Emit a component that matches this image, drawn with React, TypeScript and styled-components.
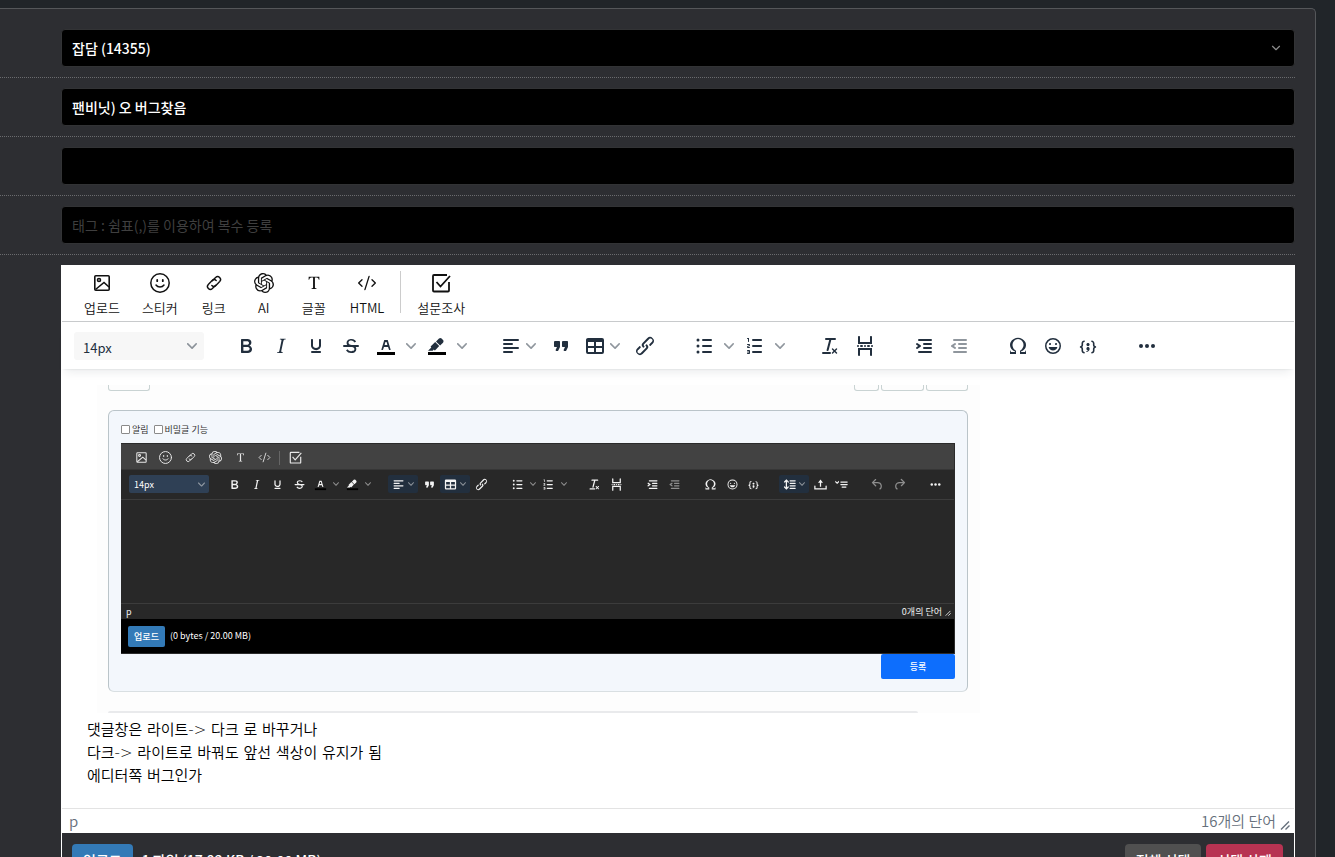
import React from "react";
import styled, { createGlobalStyle, css } from "styled-components";
import { CodeXml, ChevronDown } from "lucide-react";
import { SiOpenai } from "react-icons/si";
import { BsFonts } from "react-icons/bs";

const sans = `"Noto Sans CJK KR", "Noto Sans", sans-serif`;

const GlobalStyle = createGlobalStyle`
  *, *::before, *::after { box-sizing: border-box; }
  body { margin: 0; background: #212529; font-family: ${sans}; }
  button, input, select { font-family: inherit; margin: 0; }
  p { margin: 0; }
`;

/* ---------- icons ---------- */

const bar = (x: number, y: number, w: number) => <rect key={`${x}-${y}`} x={x} y={y} width={w} height={2} rx={1} />;

const glyphs = {
  bold: <path fillRule="evenodd" d="M7.8 19c-.3 0-.5 0-.6-.2l-.2-.5V5.7c0-.2 0-.4.2-.5l.6-.2h5c1.5 0 2.7.3 3.5 1 .7.6 1.1 1.4 1.1 2.5a3 3 0 0 1-.6 1.9c-.4.6-1 1-1.6 1.2.4.1.9.3 1.3.6s.8.7 1 1.2c.4.4.5 1 .5 1.6 0 1.3-.4 2.3-1.3 3-.8.7-2.1 1-3.8 1H7.8Zm5-8.3c.6 0 1.2-.1 1.6-.5.4-.3.6-.7.6-1.3 0-1.1-.8-1.7-2.3-1.7H9.3v3.5h3.4Zm.5 6c.7 0 1.3-.1 1.7-.4.4-.4.6-.9.6-1.5s-.2-1-.7-1.4c-.4-.3-1-.4-2-.4H9.4v3.8h4Z" />,
  italic: <path d="m16.7 4.7-.1.9h-.3c-.6 0-1 0-1.4.3-.3.3-.4.6-.5 1.1l-2.1 9.8v.6c0 .5.4.8 1.4.8h.2l-.2.8H8l.2-.8h.2c1.1 0 1.8-.5 2-1.5l2-9.8.1-.5c0-.6-.4-.8-1.4-.8h-.3l.2-.9h5.8Z" />,
  underline: <path d="M16 5c.6 0 1 .4 1 1v5.5a4 4 0 0 1-.4 1.8l-1 1.4a5.3 5.3 0 0 1-5.5 1 5 5 0 0 1-1.6-1c-.5-.4-.8-.9-1.1-1.4a4 4 0 0 1-.4-1.8V6c0-.6.4-1 1-1s1 .4 1 1v5.5c0 .3 0 .6.2 1l.6.7a3.3 3.3 0 0 0 2.2.8 3.4 3.4 0 0 0 2.2-.8c.3-.2.4-.5.6-.8l.2-.9V6c0-.6.4-1 1-1ZM8 17h8c.6 0 1 .4 1 1s-.4 1-1 1H8a1 1 0 0 1 0-2Z" />,
  strike: (
    <>
      <path d="M15.6 8.5c-.5-.7-1-1.1-1.3-1.3-.6-.4-1.3-.6-2-.6-2.7 0-2.8 1.7-2.8 2.1 0 1.6 1.8 2 3.2 2.3 4.4.9 4.6 2.8 4.6 3.9 0 1.4-.7 4.1-5 4.1A6.2 6.2 0 0 1 7 16.4l1.5-1.1c.4.6 1.6 2 3.7 2 1.6 0 2.5-.4 3-1.2.4-.8.3-2-.8-2.6-.7-.4-1.6-.7-2.9-1-1-.2-3.9-.8-3.9-3.6C7.6 6 10.3 5 12.4 5c2.9 0 4.2 1.6 4.7 2.4l-1.5 1.1Z" />
      <path d="M5 11h14a1 1 0 0 1 0 2H5a1 1 0 0 1 0-2Z" />
    </>
  ),
  color: (
    <>
      <path fill="#000" d="M3 18h18v3H3z" />
      <path d="M8.7 16h-.8a.5.5 0 0 1-.5-.6l2.7-9c.1-.3.3-.4.5-.4h2.8c.2 0 .4.1.5.4l2.7 9a.5.5 0 0 1-.5.6h-.8a.5.5 0 0 1-.4-.4l-.7-2.2c0-.3-.3-.4-.5-.4h-3.4c-.2 0-.4.1-.5.4l-.7 2.2c0 .3-.2.4-.4.4Zm2.6-7.6-.6 2a.5.5 0 0 0 .5.6h1.6a.5.5 0 0 0 .5-.6l-.6-2c0-.3-.3-.4-.5-.4h-.4c-.2 0-.4.1-.5.4Z" />
    </>
  ),
  highlight: (
    <>
      <path fill="#000" d="M3 18h18v3H3z" />
      <path d="M7.7 16.7H3l3.3-3.3-.7-.8L10.2 8l4 4.1-4 4.2c-.2.2-.6.2-.8 0l-.6-.7-1.1 1.1zm5-7.5L11 7.4l3-2.9a2 2 0 0 1 2.6 0L18 6c.7.7.7 2 0 2.7l-2.9 2.9-1.8-1.8-.5-.6" />
    </>
  ),
  align: <>{bar(4, 5, 16)}{bar(4, 9, 10)}{bar(4, 13, 16)}{bar(4, 17, 10)}</>,
  quote: <path d="M7.5 17h.9c.4 0 .7-.2.9-.6L11 13V8c0-.6-.4-1-1-1H6a1 1 0 0 0-1 1v4c0 .6.4 1 1 1h2l-1.3 2.7a1 1 0 0 0 .8 1.3Zm8 0h.9c.4 0 .7-.2.9-.6L19 13V8c0-.6-.4-1-1-1h-4a1 1 0 0 0-1 1v4c0 .6.4 1 1 1h2l-1.3 2.7a1 1 0 0 0 .8 1.3Z" />,
  table: <path d="M19 4a2 2 0 0 1 2 2v12a2 2 0 0 1-2 2H5a2 2 0 0 1-2-2V6c0-1.1.9-2 2-2h14ZM5 14v4h6v-4H5Zm14 0h-6v4h6v-4Zm0-6h-6v4h6V8ZM5 12h6V8H5v4Z" />,
  link: <path d="M6.2 12.3a1 1 0 0 1 1.4 1.4l-2 2a2 2 0 1 0 2.6 2.8l4.8-4.8a1 1 0 0 0 0-1.4 1 1 0 1 1 1.4-1.3 2.9 2.9 0 0 1 0 4L9.6 20a3.9 3.9 0 0 1-5.5-5.5l2-2Zm11.6-.6a1 1 0 0 1-1.4-1.4l2-2a2 2 0 1 0-2.6-2.8L11 10.3a1 1 0 0 0 0 1.4A1 1 0 1 1 9.6 13a2.9 2.9 0 0 1 0-4L14.4 4a3.9 3.9 0 0 1 5.5 5.5l-2 2Z" />,
  bullets: (
    <>
      {bar(10, 5, 10)}{bar(10, 11, 10)}{bar(10, 17, 10)}
      <circle cx="6" cy="6" r="1.5" /><circle cx="6" cy="12" r="1.5" /><circle cx="6" cy="18" r="1.5" />
    </>
  ),
  numbers: <path d="M10 17h8c.6 0 1 .4 1 1s-.4 1-1 1h-8a1 1 0 0 1 0-2Zm0-6h8c.6 0 1 .4 1 1s-.4 1-1 1h-8a1 1 0 0 1 0-2Zm0-6h8c.6 0 1 .4 1 1s-.4 1-1 1h-8a1 1 0 1 1 0-2ZM6 4v3.5c0 .3-.2.5-.5.5a.5.5 0 0 1-.5-.5V5h-.5a.5.5 0 0 1 0-1H6Zm-1 8.800.2.2h1.300c.3 0 .5.2.5.5s-.2.5-.5.5H4.900a1 1 0 0 1-.9-1V13c0-.4.3-.8.6-1l1.200-.4.2-.3a.2.2 0 0 0-.2-.2H4.500a.5.5 0 0 1-.5-.5c0-.3.2-.5.5-.5h1.600c.5 0 .9.4.9 1v.1c0 .4-.3.8-.6 1l-1.200.4-.2.3ZM7 17v2c0 .6-.4 1-1 1H4.500a.5.5 0 0 1 0-1h1.200c.2 0 .3-.1.3-.3 0-.2-.1-.3-.3-.3H4.400a.4.4 0 1 1 0-.8h1.300c.2 0 .3-.1.3-.3 0-.2-.1-.3-.3-.3H4.500a.5.5 0 1 1 0-1H6c.6 0 1 .4 1 1Z" />,
  clear: <path d="M13.2 6a1 1 0 0 1 0 .2l-2.6 10a1 1 0 0 1-1 .8h-.2a.8.8 0 0 1-.8-1l2.6-10H8a1 1 0 1 1 0-2h9a1 1 0 0 1 0 2h-3.8ZM5 18h7a1 1 0 0 1 0 2H5a1 1 0 0 1 0-2Zm13 1.5L16.5 18 15 19.5a.7.7 0 0 1-1-1l1.5-1.5-1.5-1.5a.7.7 0 0 1 1-1l1.5 1.5 1.5-1.5a.7.7 0 0 1 1 1L17.5 17l1.5 1.5a.7.7 0 0 1-1 1Z" />,
  pageBreak: (
    <>
      <path d="M7 3v5h10V3c0-.6.4-1 1-1s1 .4 1 1v7H5V3c0-.6.4-1 1-1s1 .4 1 1ZM6 22a1 1 0 0 1-1-1v-7h14v7c0 .6-.4 1-1 1a1 1 0 0 1-1-1v-5H7v5c0 .6-.4 1-1 1Z" />
      {bar(4, 11, 2)}{bar(7, 11, 3)}{bar(11, 11, 2)}{bar(14, 11, 3)}{bar(18, 11, 2)}
    </>
  ),
  indent: (
    <>
      {bar(6, 5, 14)}{bar(11, 9, 9)}{bar(11, 13, 9)}{bar(6, 17, 14)}
      <path d="M4.4 13.2 6.2 12l-1.8-1.2a1 1 0 0 1 1.2-1.6l3 2a1 1 0 0 1 0 1.6l-3 2a1 1 0 1 1-1.2-1.6Z" />
    </>
  ),
  outdent: (
    <>
      {bar(6, 5, 14)}{bar(11, 9, 9)}{bar(11, 13, 9)}{bar(6, 17, 14)}
      <path d="M8.6 13.2a1 1 0 0 1-1.2 1.6l-3-2a1 1 0 0 1 0-1.6l3-2a1 1 0 0 1 1.2 1.6L6.8 12l1.8 1.2Z" />
    </>
  ),
  omega: <path d="M15 18h4l1-2v4h-6v-3.3l1.4-1a6 6 0 0 0 1.8-2.9 6.3 6.3 0 0 0-.1-4.1 5.8 5.8 0 0 0-3-3.2c-.6-.3-1.3-.5-2.1-.5a5.1 5.1 0 0 0-3.9 1.8 6.3 6.3 0 0 0-1.3 6 6.2 6.2 0 0 0 1.8 3l1.4.9V20H4v-4l1 2h4v-.5l-2-1L5.4 15A6.5 6.5 0 0 1 4 11c0-1 .2-1.9.6-2.7A7 7 0 0 1 7.8 5a7.8 7.8 0 0 1 8.4 0 7.3 7.3 0 0 1 3.2 3.3c.4.8.6 1.7.6 2.7 0 1.5-.5 3-1.4 4L17 16.5l-2 1v.5Z" />,
  emoji: <path d="M9 11c.6 0 1-.4 1-1s-.4-1-1-1a1 1 0 0 0-1 1c0 .6.4 1 1 1Zm6 0c.6 0 1-.4 1-1s-.4-1-1-1a1 1 0 0 0-1 1c0 .6.4 1 1 1Zm-3 5.5c2.1 0 4-1.5 4.4-3.5H7.6c.5 2 2.3 3.5 4.4 3.5ZM12 4a8 8 0 1 0 0 16 8 8 0 0 0 0-16Zm0 14.5a6.5 6.5 0 1 1 0-13 6.5 6.5 0 0 1 0 13Z" />,
  code: <path d="M7.1 11a2.8 2.8 0 0 1-.8 2 2.8 2.8 0 0 1 .8 2v1.7c0 .3.1.6.4.8.2.3.5.4.8.4.3 0 .4.2.4.4v.8c0 .2-.1.4-.4.4-.7 0-1.4-.3-2-.8-.5-.6-.8-1.3-.8-2V15c0-.3-.1-.6-.4-.8-.2-.3-.5-.4-.8-.4a.4.4 0 0 1-.4-.4v-.8c0-.2.2-.4.4-.4.3 0 .6-.1.8-.4.3-.2.4-.5.4-.8V9.3c0-.7.3-1.4.8-2 .6-.5 1.3-.8 2-.8.3 0 .4.2.4.4v.8c0 .2-.1.4-.4.4-.3 0-.6.1-.8.4-.3.2-.4.5-.4.8V11Zm9.8 0V9.3c0-.3-.1-.6-.4-.8-.2-.3-.5-.4-.8-.4a.4.4 0 0 1-.4-.4V7c0-.2.1-.4.4-.4.7 0 1.4.3 2 .8.5.6.8 1.3.8 2V11c0 .3.1.6.4.8.2.3.5.4.8.4.2 0 .4.2.4.4v.8c0 .2-.2.4-.4.4-.3 0-.6.1-.8.4-.3.2-.4.5-.4.8v1.7c0 .7-.3 1.4-.8 2-.6.5-1.3.8-2 .8a.4.4 0 0 1-.4-.4v-.8c0-.2.1-.4.4-.4.3 0 .6-.1.8-.4.3-.2.4-.5.4-.8V15a2.8 2.8 0 0 1 .8-2 2.8 2.8 0 0 1-.8-2Zm-3.3-.4c0 .4-.1.8-.5 1.1-.3.3-.7.5-1.1.5-.4 0-.8-.2-1.1-.5-.4-.3-.5-.7-.5-1.1 0-.5.1-.9.5-1.2.3-.3.7-.4 1.1-.4.4 0 .8.1 1.1.4.4.3.5.7.5 1.2ZM12 13c.4 0 .8.1 1.1.5.4.3.5.7.5 1.1 0 1-.1 1.6-.5 2a3 3 0 0 1-1.1 1c-.4.3-.8.4-1.1.4a.5.5 0 0 1-.5-.5V17a3 3 0 0 0 1-.2l.6-.6c-.6 0-1-.2-1.3-.5-.2-.3-.3-.7-.3-1 0-.5.1-1 .5-1.2.3-.4.7-.5 1.1-.5Z" />,
  lineHeight: (
    <>
      {bar(12, 5, 10)}{bar(12, 9, 10)}{bar(12, 13, 10)}{bar(12, 17, 10)}
      <path d="M7 3.6l3.7 3.7a1 1 0 0 1-1.3 1.5h-.1L8 7.3v9.2l1.3-1.3a1 1 0 0 1 1.3 0h.1c.4.4.4 1 0 1.3v.1L7 20.4l-3.7-3.7a1 1 0 0 1 1.3-1.5h.1L6 16.7V7.4L4.7 8.7a1 1 0 0 1-1.3 0h-.1a1 1 0 0 1 0-1.3v-.1L7 3.6z" />
    </>
  ),
  exportTray: <path d="M11 15.500V9H8l4-5 4 5h-3v6.500ZM2 14.500a1 1 0 0 1 2 0V18h16v-3.500a1 1 0 0 1 2 0V20H2Z" />,
  accordion: (
    <>
      {bar(10, 7, 12)}{bar(10, 11, 12)}{bar(12, 15, 8)}
      <path d="M2 6l3 2.500L8 6v2.500l-3 2.500-3-2.500Z" />
    </>
  ),
  undo: <path d="M6.4 8H12c3.7 0 6.2 2 6.8 5.1.6 2.7-.4 5.6-2.3 6.8a1 1 0 0 1-1-1.8c1.1-.6 1.8-2.7 1.4-4.6-.5-2.1-2.1-3.5-4.9-3.5H6.4l3.3 3.3a1 1 0 1 1-1.4 1.4l-5-5a1 1 0 0 1 0-1.4l5-5a1 1 0 0 1 1.4 1.4L6.4 8Z" />,
  redo: <path d="M17.6 10H12c-2.8 0-4.4 1.4-4.9 3.5-.4 2 .3 4 1.4 4.6a1 1 0 1 1-1 1.8c-2-1.2-2.9-4.1-2.3-6.8.6-3 3-5.1 6.8-5.1h5.6l-3.3-3.3a1 1 0 1 1 1.4-1.4l5 5a1 1 0 0 1 0 1.4l-5 5a1 1 0 0 1-1.4-1.4l3.3-3.3Z" />,
  more: <><circle cx="6" cy="12" r="2" /><circle cx="12" cy="12" r="2" /><circle cx="18" cy="12" r="2" /></>,
};

type GlyphName = keyof typeof glyphs;

const Glyph = ({ name, size }: { name: GlyphName; size: number }) => (
  <svg width={size} height={size} viewBox="0 0 24 24" fill="currentColor" aria-hidden="true">{glyphs[name]}</svg>
);

const Caret = ({ size = 10 }: { size?: number }) => (
  <svg width={size} height={size} viewBox="0 0 10 10" fill="currentColor" aria-hidden="true">
    <path d="M8.7 2.2c.3-.3.8-.3 1 0 .4.4.4.9 0 1.2L5.7 7.8c-.3.3-.9.3-1.2 0L.2 3.4a.8.8 0 0 1 0-1.2c.3-.3.8-.3 1.1 0L5 6l3.7-3.8Z" />
  </svg>
);

const ResizeMark = ({ size }: { size: number }) => (
  <svg width={size} height={size} viewBox="0 0 10 10" stroke="currentColor" strokeWidth="1.4" fill="none" aria-hidden="true">
    <path d="M1 9.5 9 1.5M5.5 9.5 9.5 5.5" />
  </svg>
);

const PictureIcon = ({ size }: { size: number }) => (
  <svg width={size} height={size} viewBox="0 0 20 20" fill="none" stroke="currentColor" strokeWidth="1.6" aria-hidden="true">
    <rect x="2.8" y="2.8" width="14.4" height="14.4" rx="1" />
    <circle cx="7" cy="7" r="1.5" />
    <path d="m3.5 16.5 8.500-7 5 4.500" />
  </svg>
);

const StickerIcon = ({ size }: { size: number }) => (
  <svg width={size} height={size} viewBox="0 0 20 20" fill="none" stroke="currentColor" strokeWidth="1.5" strokeLinecap="round" aria-hidden="true">
    <circle cx="10" cy="10" r="9.2" />
    <path d="M7.200 7v1.200M12.800 7v1.200" strokeWidth="1.8" />
    <path d="M6 12c1.800 2.600 6.200 2.600 8 0" />
  </svg>
);

const ChainIcon = ({ size }: { size: number }) => (
  <svg width={size} height={size} viewBox="0 0 20 20" fill="none" stroke="currentColor" strokeWidth="1.4" strokeLinecap="round" aria-hidden="true">
    <path d="m8.300 7.800 3.300-3.300a2.900 2.900 0 0 1 4.100 4.100l-3.800 3.800a2.900 2.900 0 0 1-4.100 0" />
    <path d="m11.700 12.200-3.300 3.300a2.900 2.900 0 0 1-4.100-4.100l3.800-3.800a2.900 2.900 0 0 1 4.100 0" />
  </svg>
);

const PollIcon = ({ size }: { size: number }) => (
  <svg width={size} height={size} viewBox="0 0 20 20" fill="none" stroke="currentColor" strokeWidth="1.8" aria-hidden="true">
    <path d="M16 2H3a1 1 0 0 0-1 1v14.500a1 1 0 0 0 1 1h14a1 1 0 0 0 1-1V9" />
    <path d="m5.500 9 4 4.500L19 3" />
  </svg>
);

/* ---------- page frame ---------- */

const Page = styled.main`
  height: 100vh;
  overflow: hidden;
  padding: 8px 19px 0 0;
`;

const Panel = styled.form`
  padding: 10px 20px 40px 0;
  background: #2d2e32;
  border: solid #55575a;
  border-width: 1px 1px 0 0;
  border-top-right-radius: 5px;
`;

const FieldRow = styled.div`
  position: relative;
  padding: 10px 0 10px 61px;
  border-bottom: 1px dotted #6a6b6e;
`;

const fieldStyle = css`
  display: block;
  width: 100%;
  height: 38px;
  padding: 0 10px;
  border: 1px solid #323335;
  border-radius: 4px;
  background: #000;
  color: #fff;
  font-size: 14px;
  font-weight: 500;
  line-height: 20px;
  appearance: none;
`;

const FieldSelect = styled.select`${fieldStyle}`;

const FieldInput = styled.input`
  ${fieldStyle}
  &::placeholder { color: #3f3f3f; opacity: 1; font-weight: 400; }
`;

const FieldCaret = styled.span`
  position: absolute;
  top: 22px;
  right: 12px;
  display: flex;
  color: #8c8c8c;
  pointer-events: none;
`;

/* ---------- editor ---------- */

const Editor = styled.section`
  margin: 10px 0 0 61px;
  border: solid #fff;
  border-width: 0 1px;
`;

const MediaBar = styled.div`
  display: flex;
  height: 57px;
  padding: 6px 11px 5px;
  background: #fff;
  border-bottom: 1px solid #c8cacc;
`;

const MediaButton = styled.button`
  display: flex;
  flex-direction: column;
  align-items: center;
  justify-content: space-between;
  min-width: 50px;
  padding: 2px 11px 0;
  border: 0;
  background: none;
  color: #111;
  font-size: 13px;
  font-weight: 350;
  line-height: 16px;
`;

const IconSlot = styled.span`
  display: flex;
  align-items: center;
  justify-content: center;
  height: 20px;
`;

const MediaDivider = styled.span`
  width: 1px;
  margin: 0 5px 3px;
  background: #ccc;
`;

const ToolBar = styled.div`
  position: relative;
  display: flex;
  gap: 25px;
  height: 47px;
  padding: 10px 12px 9px;
  background: #fff;
  color: #222f3e;
  box-shadow: 0 2px 2px -2px rgba(34, 47, 62, 0.15), 0 8px 8px -4px rgba(34, 47, 62, 0.08);
`;

const ToolGroup = styled.div`
  display: flex;
  gap: 1px;
`;

type ToolKind = "plain" | "split" | "menu";

const toolWidths: Record<ToolKind, string> = { plain: "34px", split: "50px", menu: "48px" };

const Tool = styled.button<{ $kind: ToolKind }>`
  display: flex;
  align-items: center;
  gap: ${(p) => (p.$kind === "menu" ? 3 : 8)}px;
  width: ${(p) => toolWidths[p.$kind]};
  height: 28px;
  padding: 0 0 0 ${(p) => (p.$kind === "menu" ? 4 : 5)}px;
  border: 0;
  background: none;
  color: inherit;
  &:disabled { opacity: 0.5; }
`;

const CaretTone = styled.span`
  display: flex;
  opacity: 0.5;
`;

const SizePicker = styled.label`
  position: relative;
  display: flex;
  align-items: center;
  justify-content: flex-end;
  width: 130px;
  height: 28px;
  padding-right: 7px;
`;

const SizeSelect = styled.select`
  position: absolute;
  inset: 0;
  width: 100%;
  padding: 2px 9px 0;
  border: 0;
  border-radius: 3px;
  background: #f7f7f7;
  color: #222f3e;
  font-size: 13px;
  appearance: none;
`;

const CaretOverlay = styled(CaretTone)`
  position: relative;
  pointer-events: none;
`;

const Document = styled.div`
  padding: 16px 25px 20px;
  background: #fff;
  color: #000;
`;

const Paragraph = styled.p`
  font-family: "DejaVu Sans", ${sans};
  font-size: 15px;
  font-weight: 350;
  line-height: 23px;
`;

const StatusBar = styled.div`
  display: flex;
  align-items: center;
  height: 25px;
  padding: 0 4px 0 7px;
  border-top: 1px solid #e3e3e3;
  background: #fff;
  color: #66707c;
  font-size: 15px;
  font-weight: 350;
  line-height: 22px;
`;

const WordCount = styled.span`
  margin-left: auto;
  margin-right: 4px;
`;

const ResizeHandle = styled.span`
  display: flex;
  align-self: flex-end;
  padding-bottom: 3px;
`;

const AttachBar = styled.div`
  display: flex;
  align-items: center;
  gap: 5px;
  padding: 11px 11px 0 10px;
  color: #fff;
  font-size: 14px;
  font-weight: 500;
`;

const AttachInfo = styled.span`
  flex: 1;
  padding-left: 4px;
`;

const AttachButton = styled.button<{ $tone: string }>`
  height: 32px;
  padding: 0 11px;
  border: 0;
  border-radius: 4px;
  background: ${(p) => p.$tone};
  color: #fff;
  font-size: 14px;
  font-weight: 500;
`;

/* ---------- inserted capture of the comment form ---------- */

const Capture = styled.div`
  max-width: 883px;
  height: 328px;
  margin: 0 0 6px 10px;
  padding: 0 12px 0 11px;
  overflow: hidden;
  background: #fdfdfd;
  font-size: 9px;
  line-height: 12px;
`;

const StubRow = styled.div`
  display: flex;
  gap: 2px;
  height: 6px;
  margin-bottom: 19px;
`;

const Stub = styled.span<{ $width: number; $push?: boolean }>`
  width: ${(p) => p.$width}px;
  margin-right: ${(p) => (p.$push ? "auto" : "0")};
  border: solid #c9d3d3;
  border-width: 0 1px 1px;
  border-radius: 0 0 3px 3px;
`;

const CommentCard = styled.div`
  height: 282px;
  padding: 12px;
  border: 1px solid #bac4c9;
  border-bottom-color: #d9dfe2;
  border-radius: 6px;
  background: #f3f7fc;
`;

const CheckRow = styled.div`
  display: flex;
  gap: 5px;
  height: 20px;
  color: #333;
`;

const CheckLabel = styled.label`
  display: flex;
  align-items: center;
  gap: 2px;
  height: 13px;
`;

const CheckBox = styled.input`
  appearance: none;
  width: 9px;
  height: 9px;
  border: 1px solid #8a8a8a;
  border-radius: 1px;
  background: #fff;
`;

const DarkEditor = styled.div`
  border: 1px solid #2b2b2b;
  border-left-width: 0;
  background: #282828;
  color: #eee;
`;

const DarkMediaBar = styled.div`
  display: flex;
  align-items: center;
  height: 26px;
  padding: 2px 8px 0;
  border-bottom: 1px solid #363636;
  background: #424242;
`;

const DarkMediaGroup = styled.div`
  display: flex;
  justify-content: space-between;
  width: 148px;
`;

const DarkMediaButton = styled.button`
  display: flex;
  align-items: center;
  justify-content: center;
  width: 24px;
  height: 20px;
  padding: 0;
  border: 0;
  background: none;
  color: #e8e8e8;
`;

const DarkDivider = styled.span`
  width: 1px;
  height: 14px;
  margin: 0 3px 0 2px;
  background: #666;
`;

const DarkToolBar = styled.div`
  display: flex;
  gap: 15px;
  height: 30px;
  padding: 5px 8px;
  border-bottom: 1px solid #3c3c3c;
`;

const DarkGroup = styled.div<{ $width: number }>`
  display: flex;
  justify-content: space-between;
  width: ${(p) => p.$width}px;
`;

const darkWidths: Record<ToolKind, string> = { plain: "21px", split: "31px", menu: "30px" };

const DarkTool = styled.button<{ $kind: ToolKind }>`
  display: flex;
  align-items: center;
  gap: ${(p) => (p.$kind === "menu" ? 2 : 5)}px;
  width: ${(p) => darkWidths[p.$kind]};
  height: 18px;
  padding: 0 0 0 3px;
  border: 0;
  border-radius: 2px;
  background: ${(p) => (p.$kind === "menu" ? "#222f3e" : "none")};
  color: #f4f4f4;
  &:disabled { opacity: 0.5; }
`;

const DarkSizePicker = styled(SizePicker)`
  width: 80px;
  height: 18px;
  padding-right: 4px;
`;

const DarkSizeSelect = styled(SizeSelect)`
  padding: 0 5px;
  border-radius: 2px;
  background: #2f4055;
  color: #fff;
  font-size: 9px;
`;

const DarkCanvas = styled.div`
  height: 103px;
`;

const DarkStatus = styled.div`
  display: flex;
  align-items: center;
  justify-content: flex-end;
  gap: 3px;
  height: 16px;
  padding: 0 3px 0 5px;
  border-top: 1px solid #3c3c3c;
`;

const DarkPath = styled.span`
  margin-right: auto;
`;

const DarkAttach = styled.div`
  display: flex;
  align-items: center;
  gap: 5px;
  height: 34px;
  padding: 0 7px;
  background: #000;
  color: #fff;
`;

const SmallButton = styled.button<{ $primary?: boolean }>`
  display: block;
  width: ${(p) => (p.$primary ? 74 : 37)}px;
  height: ${(p) => (p.$primary ? 25 : 21)}px;
  margin-left: ${(p) => (p.$primary ? "auto" : "0")};
  padding: 0;
  border: 0;
  border-radius: 2px;
  background: ${(p) => (p.$primary ? "#0d6efd" : "#337ab7")};
  color: #fff;
  font-size: 9px;
  font-weight: 500;
`;

const CaptureEdge = styled.div`
  height: 2px;
  margin: 19px 50px 0 0;
  border-radius: 2px 2px 0 0;
  background: #e9eaec;
`;

/* ---------- data ---------- */

type ToolDef = { name: GlyphName; label: string; kind?: ToolKind; off?: boolean };
type ToolSet = { width: number; tools: ToolDef[] };

const commonGroups: ToolSet[] = [
  {
    width: 149,
    tools: [
      { name: "bold", label: "굵게" },
      { name: "italic", label: "기울임꼴" },
      { name: "underline", label: "밑줄" },
      { name: "strike", label: "취소선" },
      { name: "color", label: "글자 색", kind: "split" },
      { name: "highlight", label: "배경 색", kind: "split" },
    ],
  },
  {
    width: 104,
    tools: [
      { name: "align", label: "정렬", kind: "menu" },
      { name: "quote", label: "인용" },
      { name: "table", label: "표", kind: "menu" },
      { name: "link", label: "링크 삽입" },
    ],
  },
  {
    width: 62,
    tools: [
      { name: "bullets", label: "글머리 기호", kind: "split" },
      { name: "numbers", label: "번호 매기기", kind: "split" },
    ],
  },
  { width: 43, tools: [{ name: "clear", label: "서식 지우기" }, { name: "pageBreak", label: "페이지 나누기" }] },
  { width: 43, tools: [{ name: "indent", label: "들여쓰기" }, { name: "outdent", label: "내어쓰기", off: true }] },
  {
    width: 64,
    tools: [
      { name: "omega", label: "특수 문자" },
      { name: "emoji", label: "이모지" },
      { name: "code", label: "코드" },
    ],
  },
];

const moreGroup: ToolSet = { width: 21, tools: [{ name: "more", label: "더 보기" }] };

const darkGroups: ToolSet[] = [
  ...commonGroups,
  {
    width: 73,
    tools: [
      { name: "lineHeight", label: "줄 간격", kind: "menu" },
      { name: "exportTray", label: "내보내기" },
      { name: "accordion", label: "접기" },
    ],
  },
  {
    width: 43,
    tools: [
      { name: "undo", label: "실행 취소", off: true },
      { name: "redo", label: "다시 실행", off: true },
    ],
  },
  moreGroup,
];

const mediaItems = [
  { label: "업로드", icon: (s: number) => <PictureIcon size={s} /> },
  { label: "스티커", icon: (s: number) => <StickerIcon size={s} /> },
  { label: "링크", icon: (s: number) => <ChainIcon size={s} /> },
  { label: "AI", icon: (s: number) => <SiOpenai size={s} /> },
  { label: "글꼴", icon: (s: number) => <BsFonts size={s} /> },
  { label: "HTML", icon: (s: number) => <CodeXml size={s} strokeWidth={1.6} /> },
];

/* ---------- parts ---------- */

const CommentFormCapture = () => (
  <Capture>
    <StubRow>
      <Stub $width={42} $push />
      <Stub $width={25} />
      <Stub $width={43} />
      <Stub $width={42} />
    </StubRow>
    <CommentCard>
      <CheckRow>
        <CheckLabel><CheckBox type="checkbox" />알림</CheckLabel>
        <CheckLabel><CheckBox type="checkbox" />비밀글 기능</CheckLabel>
      </CheckRow>
      <DarkEditor>
        <DarkMediaBar>
          <DarkMediaGroup>
            {mediaItems.map((m) => (
              <DarkMediaButton key={m.label} type="button" aria-label={m.label}>{m.icon(13)}</DarkMediaButton>
            ))}
          </DarkMediaGroup>
          <DarkDivider />
          <DarkMediaButton type="button" aria-label="설문조사"><PollIcon size={13} /></DarkMediaButton>
        </DarkMediaBar>
        <DarkToolBar>
          <DarkSizePicker>
            <DarkSizeSelect aria-label="글자 크기"><option>14px</option></DarkSizeSelect>
            <CaretOverlay><Caret size={7} /></CaretOverlay>
          </DarkSizePicker>
          {darkGroups.map((g) => (
            <DarkGroup key={g.tools[0].name} $width={g.width}>
              {g.tools.map((t) => (
                <DarkTool key={t.name} type="button" aria-label={t.label} disabled={t.off} $kind={t.kind ?? "plain"}>
                  <Glyph name={t.name} size={15} />
                  {t.kind && <CaretTone><Caret size={6} /></CaretTone>}
                </DarkTool>
              ))}
            </DarkGroup>
          ))}
        </DarkToolBar>
        <DarkCanvas />
        <DarkStatus>
          <DarkPath>p</DarkPath>
          0개의 단어
          <ResizeHandle><ResizeMark size={6} /></ResizeHandle>
        </DarkStatus>
        <DarkAttach>
          <SmallButton type="button">업로드</SmallButton>
          (0 bytes / 20.00 MB)
        </DarkAttach>
      </DarkEditor>
      <SmallButton type="button" $primary>등록</SmallButton>
    </CommentCard>
    <CaptureEdge />
  </Capture>
);

const App = () => (
  <>
    <GlobalStyle />
    <Page>
      <Panel onSubmit={(e) => e.preventDefault()}>
        <FieldRow>
          <FieldSelect aria-label="게시판 분류"><option>잡담 (14355)</option></FieldSelect>
          <FieldCaret><ChevronDown size={14} strokeWidth={2} /></FieldCaret>
        </FieldRow>
        <FieldRow><FieldInput aria-label="제목" defaultValue="팬비닛) 오 버그찾음" /></FieldRow>
        <FieldRow><FieldInput aria-label="출처" /></FieldRow>
        <FieldRow><FieldInput aria-label="태그" placeholder="태그 : 쉼표(,)를 이용하여 복수 등록" /></FieldRow>

        <Editor>
          <MediaBar>
            {mediaItems.map((m) => (
              <MediaButton key={m.label} type="button"><IconSlot>{m.icon(20)}</IconSlot>{m.label}</MediaButton>
            ))}
            <MediaDivider />
            <MediaButton type="button"><IconSlot><PollIcon size={20} /></IconSlot>설문조사</MediaButton>
          </MediaBar>
          <ToolBar>
            <SizePicker>
              <SizeSelect aria-label="글자 크기"><option>14px</option></SizeSelect>
              <CaretOverlay><Caret /></CaretOverlay>
            </SizePicker>
            {[...commonGroups, moreGroup].map((g) => (
              <ToolGroup key={g.tools[0].name}>
                {g.tools.map((t) => (
                  <Tool key={t.name} type="button" aria-label={t.label} disabled={t.off} $kind={t.kind ?? "plain"}>
                    <Glyph name={t.name} size={24} />
                    {t.kind && <CaretTone><Caret /></CaretTone>}
                  </Tool>
                ))}
              </ToolGroup>
            ))}
          </ToolBar>
          <Document>
            <CommentFormCapture />
            <Paragraph>댓글창은 라이트-&gt; 다크 로 바꾸거나</Paragraph>
            <Paragraph>다크-&gt; 라이트로 바꿔도 앞선 색상이 유지가 됨</Paragraph>
            <Paragraph>에디터쪽 버그인가</Paragraph>
          </Document>
          <StatusBar>
            <span>p</span>
            <WordCount>16개의 단어</WordCount>
            <ResizeHandle><ResizeMark size={10} /></ResizeHandle>
          </StatusBar>
          <AttachBar>
            <AttachButton type="button" $tone="#337ab7">업로드</AttachButton>
            <AttachInfo>1 파일 (17.92 KB / 20.00 MB)</AttachInfo>
            <AttachButton type="button" $tone="#505050">전체 선택</AttachButton>
            <AttachButton type="button" $tone="#b73352">선택 삭제</AttachButton>
          </AttachBar>
        </Editor>
      </Panel>
    </Page>
  </>
);

export default App;
